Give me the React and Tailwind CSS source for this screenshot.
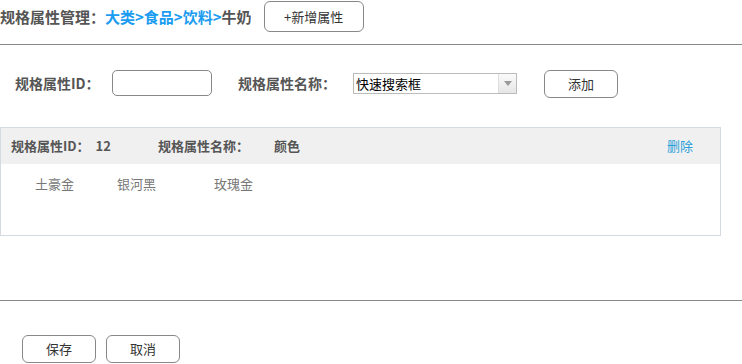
import React from "react";

const font = { fontFamily: '"Noto Sans CJK SC", "Liberation Sans", sans-serif' };

export default function App() {
  return (
    <div className="w-[742px] h-[364px] bg-white overflow-hidden text-[#555]" style={font}>
      {/* header */}
      <div className="flex items-center h-[32px] pt-[1px]">
        <div className="text-[15px] font-bold leading-none whitespace-nowrap">
          <span className="text-[#555]">规格属性管理：</span>
          <span className="text-[#1a9cf0]">大类&gt;食品&gt;饮料&gt;</span>
          <span className="text-[#555]">牛奶</span>
        </div>
        <button className="ml-[12px] w-[100px] h-[31px] border border-[#888] rounded-[6px] text-[13px] text-[#333] bg-white">
          +新增属性
        </button>
      </div>
      <div className="mt-[12px] border-t border-[#888]" />

      {/* search row */}
      <div className="flex items-start mt-[25px] pl-[15px]">
        <div className="w-[97px] h-[26px] leading-[26px] text-[14px] font-bold text-[#555] whitespace-nowrap">规格属性ID：</div>
        <div className="w-[100px] h-[26px] border border-[#888] rounded-[5px] bg-white" />
        <div className="ml-[26px] w-[115px] h-[26px] leading-[26px] text-[14px] font-bold text-[#555] whitespace-nowrap">规格属性名称：</div>
        <div className="mt-[3px] w-[164px] h-[21px] border border-[#bbb] flex items-stretch bg-white">
          <div className="flex-1 text-[13px] leading-[19px] pl-[2px] text-black">快速搜索框</div>
          <div className="w-[18px] border-l border-[#ddd] bg-gradient-to-b from-[#fafafa] to-[#e6e6e6] flex items-center justify-center">
            <svg width="8" height="5" viewBox="0 0 8 5"><path d="M0 0h8L4 5z" fill="#999" /></svg>
          </div>
        </div>
        <button className="ml-[27px] w-[74px] h-[28px] border border-[#888] rounded-[6px] text-[13px] text-[#333] bg-white">
          添加
        </button>
      </div>

      {/* panel */}
      <div className="mt-[29px] w-[721px] h-[109px] border border-[#d3dae2] flex flex-col">
        <div className="h-[36px] bg-[#f0f0f0] flex items-center text-[13px] font-bold text-[#555] pl-[10px] whitespace-nowrap">
          <span>规格属性ID：</span>
          <span className="ml-[6px]">12</span>
          <span className="ml-[47px]">规格属性名称：</span>
          <span className="ml-[25px]">颜色</span>
          <span className="ml-auto mr-[27px] font-normal text-[#2a9fd8]">删除</span>
        </div>
        <div className="flex-1 flex items-start pt-[10px] text-[13px] text-[#777] whitespace-nowrap">
          <span className="ml-[34px]">土豪金</span>
          <span className="ml-[43px]">银河黑</span>
          <span className="ml-[58px]">玫瑰金</span>
        </div>
      </div>

      <div className="mt-[64px] border-t border-[#888]" />

      <div className="flex mt-[34px] pl-[22px] gap-[10px]">
        <button className="w-[74px] h-[28px] border border-[#888] rounded-[6px] text-[13px] text-[#333] bg-white">保存</button>
        <button className="w-[74px] h-[28px] border border-[#888] rounded-[6px] text-[13px] text-[#333] bg-white">取消</button>
      </div>
    </div>
  );
}
